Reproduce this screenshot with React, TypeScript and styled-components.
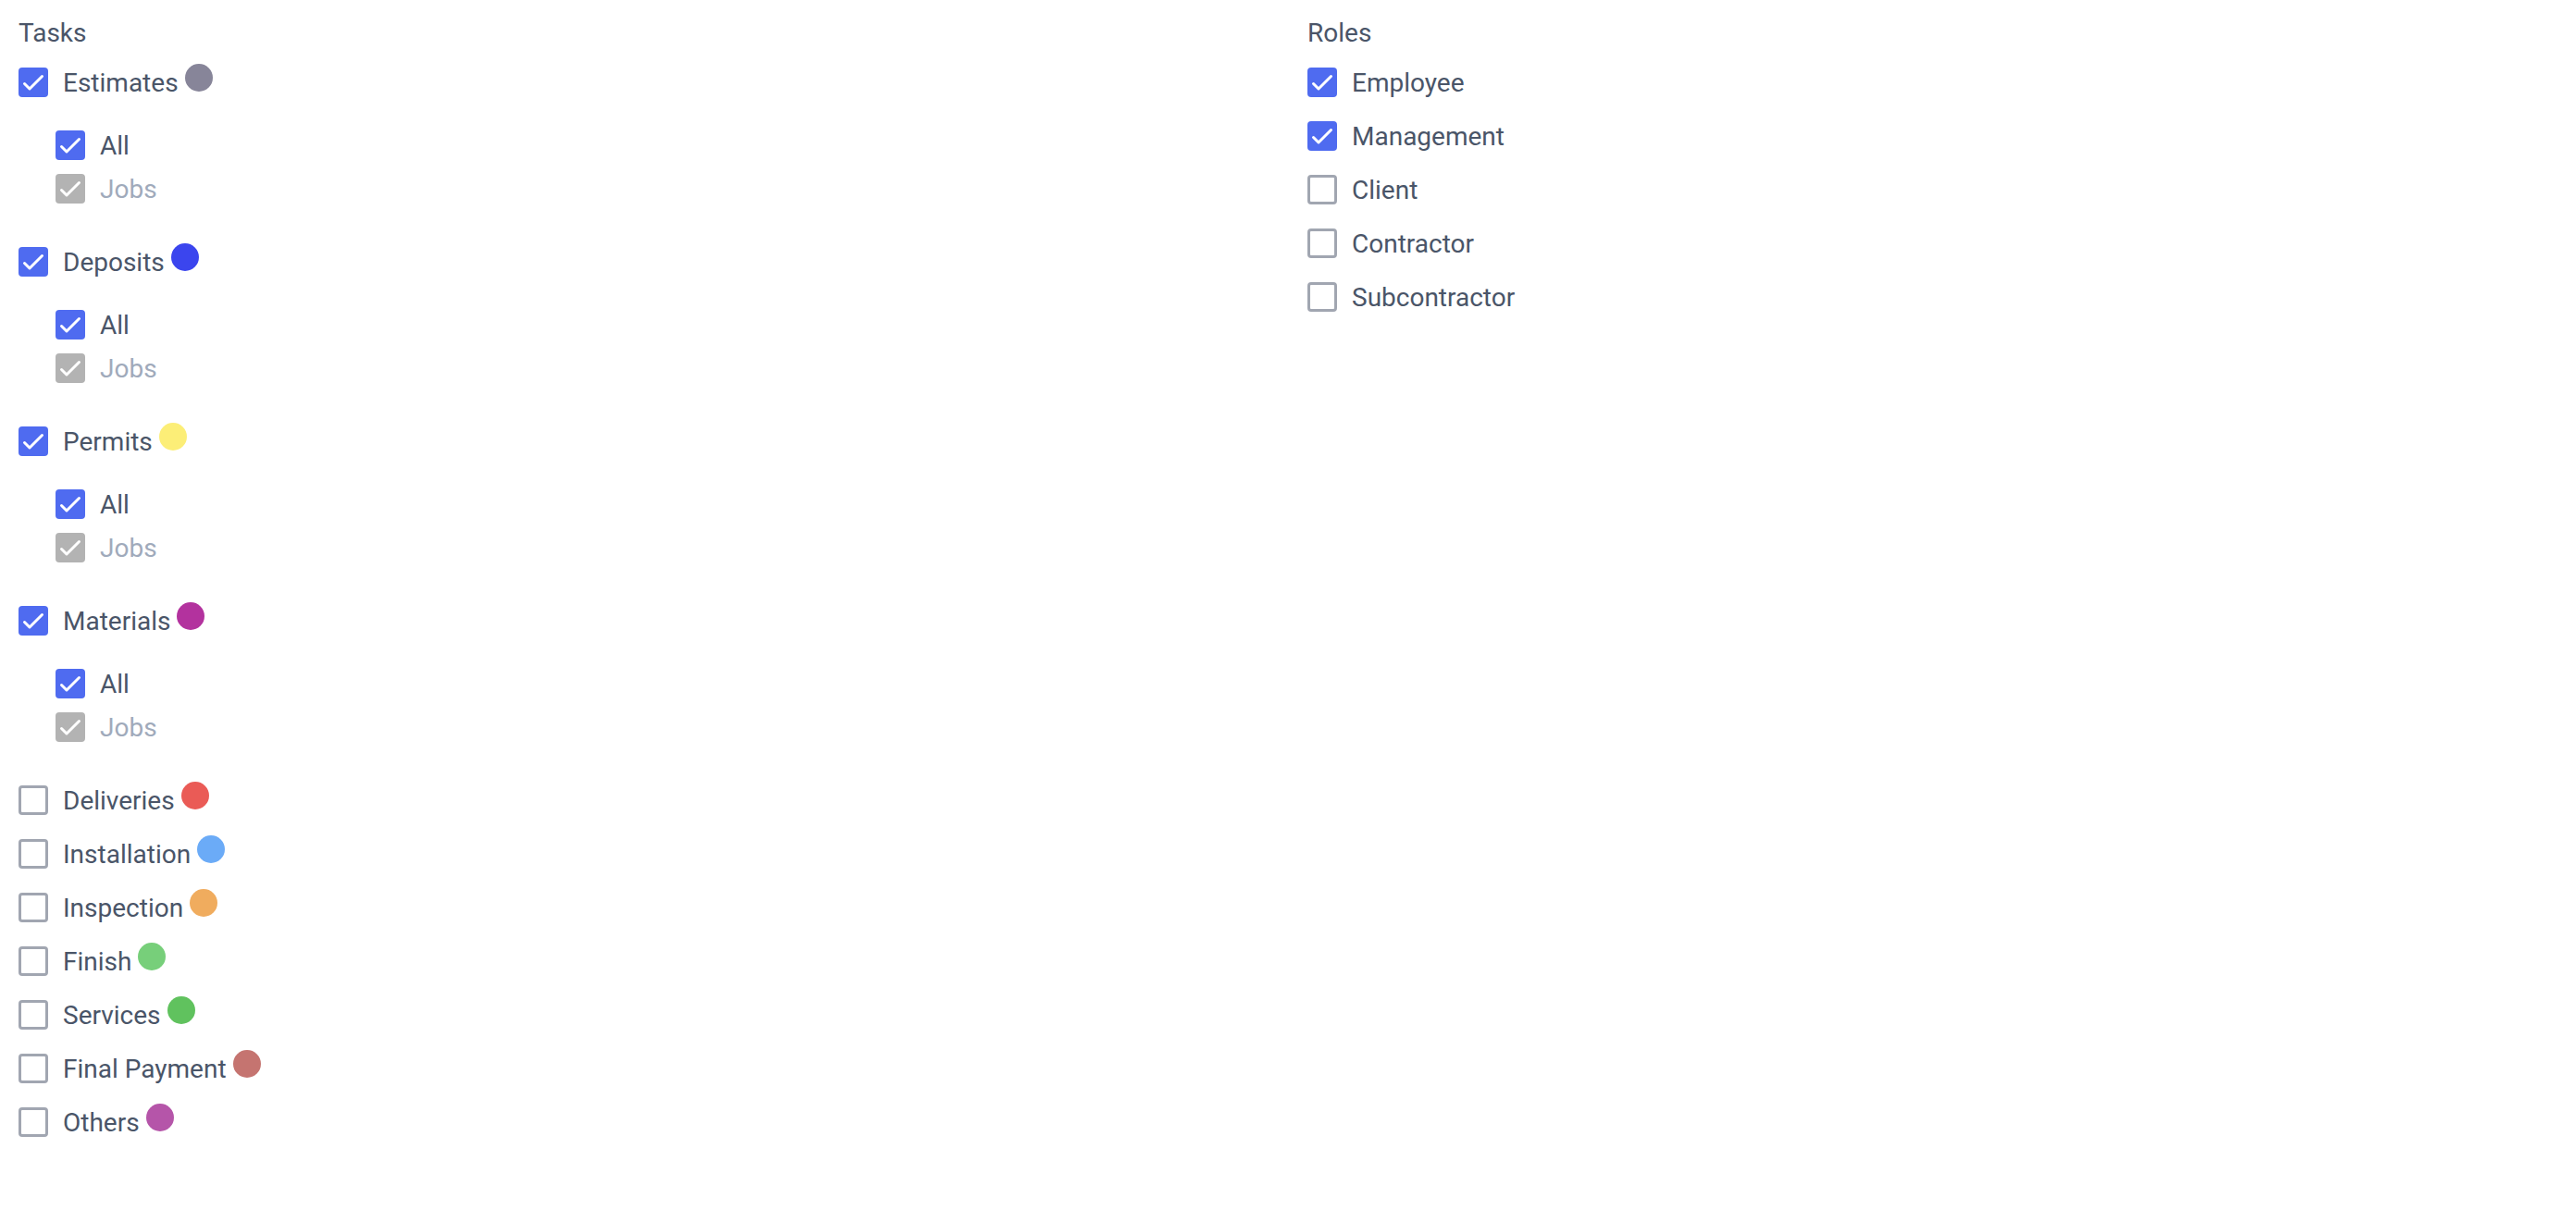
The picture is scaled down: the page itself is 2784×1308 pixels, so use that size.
import * as React from 'react'
import styled, { createGlobalStyle } from 'styled-components'

const GlobalStyle = createGlobalStyle`
  body {
    margin: 0;
    background: #ffffff;
    font-family: Roboto, "Liberation Sans", Arial, sans-serif;
  }
`

const Page = styled.div`
  display: grid;
  grid-template-columns: 1393px 1fr;
  padding: 19px 0 40px 20px;
  color: #4a5568;
`

const Column = styled.section`
  display: flex;
  flex-direction: column;
`

const Title = styled.h3`
  margin: 0 0 8px 0;
  font-size: 28px;
  font-weight: 400;
  line-height: 33px;
  color: #4a5568;
`

const Row = styled.div<{ $sub?: boolean }>`
  display: flex;
  align-items: center;
  height: ${(p) => (p.$sub ? '47px' : '58px')};
`

const Box = styled.span<{ $checked?: boolean; $disabled?: boolean }>`
  box-sizing: border-box;
  flex: none;
  width: 32px;
  height: 32px;
  border-radius: 4px;
  display: flex;
  align-items: center;
  justify-content: center;
  background: ${(p) =>
    p.$disabled ? '#b3b3b3' : p.$checked ? '#4f6bf0' : '#ffffff'};
  border: ${(p) => (p.$checked || p.$disabled ? 'none' : '3px solid #a1a6b1')};
`

const Label = styled.span<{ $disabled?: boolean }>`
  margin-left: 16px;
  font-size: 28px;
  line-height: 33px;
  color: ${(p) => (p.$disabled ? '#a0aabb' : '#4a5568')};
`

const Dot = styled.span<{ $color: string }>`
  flex: none;
  width: 30px;
  height: 30px;
  margin-left: 7px;
  margin-top: -10px;
  border-radius: 50%;
  background: ${(p) => p.$color};
`

const SubList = styled.div`
  display: flex;
  flex-direction: column;
  padding-left: 40px;
  margin: 15.5px 0 26.5px 0;
`

const Check = ({ checked, disabled }: { checked?: boolean; disabled?: boolean }) => (
  <Box $checked={checked} $disabled={disabled}>
    {(checked || disabled) && (
      <svg width="32" height="32" viewBox="0 0 32 32">
        <polyline
          points="6.5,17.5 12,23 25.5,9.5"
          fill="none"
          stroke="#ffffff"
          strokeWidth="3"
          strokeLinecap="round"
          strokeLinejoin="round"
        />
      </svg>
    )}
  </Box>
)

interface Task {
  name: string
  color: string
  checked: boolean
}

const tasks: Task[] = [
  { name: 'Estimates', color: '#878599', checked: true },
  { name: 'Deposits', color: '#3b45ee', checked: true },
  { name: 'Permits', color: '#fcee77', checked: true },
  { name: 'Materials', color: '#b3329e', checked: true },
  { name: 'Deliveries', color: '#ea5b56', checked: false },
  { name: 'Installation', color: '#6babf7', checked: false },
  { name: 'Inspection', color: '#f0ac5e', checked: false },
  { name: 'Finish', color: '#77cf7a', checked: false },
  { name: 'Services', color: '#60c25e', checked: false },
  { name: 'Final Payment', color: '#c57470', checked: false },
  { name: 'Others', color: '#b555a9', checked: false },
]

const roles = [
  { name: 'Employee', checked: true },
  { name: 'Management', checked: true },
  { name: 'Client', checked: false },
  { name: 'Contractor', checked: false },
  { name: 'Subcontractor', checked: false },
]

const App = () => (
  <>
    <GlobalStyle />
    <Page>
      <Column>
        <Title>Tasks</Title>
        {tasks.map((task) => (
          <React.Fragment key={task.name}>
            <Row>
              <Check checked={task.checked} />
              <Label>{task.name}</Label>
              <Dot $color={task.color} />
            </Row>
            {task.checked && (
              <SubList>
                <Row $sub>
                  <Check checked />
                  <Label>All</Label>
                </Row>
                <Row $sub>
                  <Check disabled />
                  <Label $disabled>Jobs</Label>
                </Row>
              </SubList>
            )}
          </React.Fragment>
        ))}
      </Column>
      <Column>
        <Title>Roles</Title>
        {roles.map((role) => (
          <Row key={role.name}>
            <Check checked={role.checked} />
            <Label>{role.name}</Label>
          </Row>
        ))}
      </Column>
    </Page>
  </>
)

export default App
